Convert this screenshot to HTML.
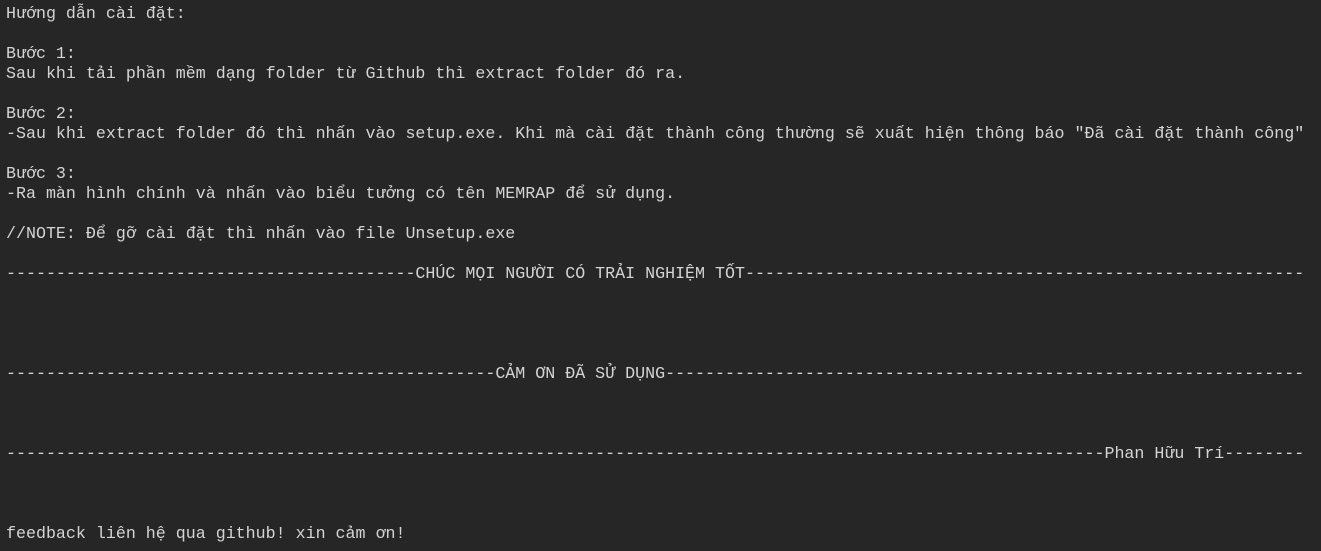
<!DOCTYPE html>
<html><head><meta charset="utf-8"><style>
html,body{margin:0;padding:0;background:#262626;width:1321px;height:551px;overflow:hidden}
pre{margin:0;padding:4px 0 0 6px;font-family:"Liberation Mono","DejaVu Sans Mono",monospace;font-size:16.65px;line-height:20px;color:#d4d4d4;white-space:pre}
</style></head><body><pre>Hướng dẫn cài đặt:

Bước 1:
Sau khi tải phần mềm dạng folder từ Github thì extract folder đó ra.

Bước 2:
-Sau khi extract folder đó thì nhấn vào setup.exe. Khi mà cài đặt thành công thường sẽ xuất hiện thông báo "Đã cài đặt thành công"

Bước 3:
-Ra màn hình chính và nhấn vào biểu tưởng có tên MEMRAP để sử dụng.

//NOTE: Để gỡ cài đặt thì nhấn vào file Unsetup.exe

-----------------------------------------CHÚC MỌI NGƯỜI CÓ TRẢI NGHIỆM TỐT--------------------------------------------------------




-------------------------------------------------CẢM ƠN ĐÃ SỬ DỤNG----------------------------------------------------------------



--------------------------------------------------------------------------------------------------------------Phan Hữu Trí--------



feedback liên hệ qua github! xin cảm ơn!</pre></body></html>
